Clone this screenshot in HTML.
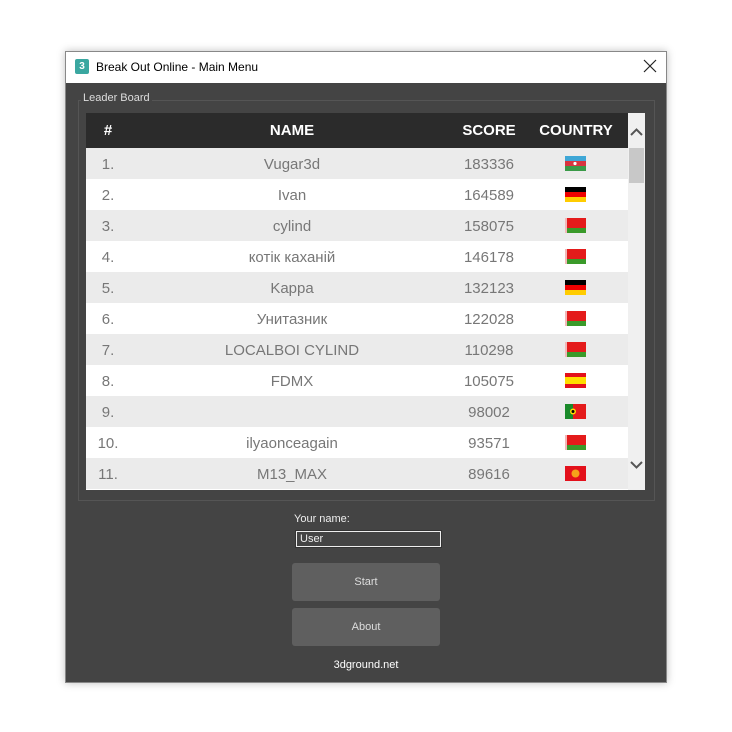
<!DOCTYPE html>
<html><head><style>
*{margin:0;padding:0;box-sizing:border-box}
body{width:732px;height:732px;background:#fff;position:relative;font-family:"Liberation Sans","Noto Sans CJK SC",sans-serif;overflow:hidden}
.win{position:absolute;left:65px;top:51px;width:602px;height:632px;background:#444;border:1px solid #888;box-shadow:0 0 8px rgba(0,0,0,.25)}
.tb{position:absolute;left:0;top:0;width:600px;height:31px;background:#fff;font-size:12px;color:#000}
.tb .ic{position:absolute;left:9px;top:7px;width:14px;height:15px;background:#3aa7a0;color:#fff;font-size:10px;font-weight:bold;text-align:center;line-height:15px;border-radius:2px}
.tb .t{position:absolute;left:30px;top:8px}
.tb .x{position:absolute;left:577px;top:7px}
.grp{position:absolute;left:12px;top:48px;width:577px;height:401px;border:1px solid #555}
.gl{position:absolute;left:15px;top:40px;font-size:11px;color:#ddd;background:#444;padding:0 2px}
.tbl{position:absolute;left:20px;top:61px;width:542px;height:377px;background:#fff;overflow:hidden}
.hd{height:35px;background:#2b2b2b;color:#fff;font-weight:bold;font-size:15px;position:relative}
.row{height:31px;position:relative;color:#777;font-size:15px}
.c{position:absolute;top:0;line-height:36px;text-align:center;transform:translateX(-50%);white-space:nowrap}
.row .c{line-height:34px}
.f{position:absolute;left:479px;top:8px;width:21px;height:15px}
.sb{position:absolute;left:562px;top:61px;width:17px;height:377px;background:#f0f0f0}
.th{position:absolute;left:1px;top:35px;width:15px;height:35px;background:#c8c8c8}
.lbl{position:absolute;left:228px;top:461px;color:#eee;font-size:11px}
.inp{position:absolute;left:230px;top:479px;width:145px;height:16px;border:1px solid #eee;outline:1px solid #333;background:#444;color:#eee;font-size:11px;padding-left:3px;line-height:14px}
.btn{position:absolute;left:226px;width:148px;height:38px;background:#5f5f5f;border-radius:3px;color:#ddd;font-size:11px;text-align:center;line-height:38px}
.ft{position:absolute;left:0;width:600px;top:607px;text-align:center;color:#fff;font-size:11px}
</style></head><body>
<div class="win">
<div class="tb"><div class="ic">3</div><div class="t">Break Out Online - Main Menu</div><svg class="x" width="14" height="14" viewBox="0 0 14 14"><path d="M1 1L13 13M13 1L1 13" stroke="#222" stroke-width="1.2"/></svg></div>
<div class="grp"></div><div class="gl">Leader Board</div>
<div class="tbl">
<div class="hd"><span class="c" style="left:22px">#</span><span class="c" style="left:206px">NAME</span><span class="c" style="left:403px">SCORE</span><span class="c" style="left:490px">COUNTRY</span></div>
<div>
<div class="row" style="background:#ebebeb"><span class="c" style="left:22px">1.</span><span class="c" style="left:206px">Vugar3d</span><span class="c" style="left:403px">183336</span><svg class="f" viewBox="0 0 21 15"><rect width="21" height="5" fill="#3fa7d6"/><rect y="5" width="21" height="5" fill="#d8343f"/><rect y="10" width="21" height="5" fill="#3a9a48"/><circle cx="10" cy="7.5" r="1.6" fill="#fff"/></svg></div>
<div class="row" style="background:#fff"><span class="c" style="left:22px">2.</span><span class="c" style="left:206px">Ivan</span><span class="c" style="left:403px">164589</span><svg class="f" viewBox="0 0 21 15"><rect width="21" height="5" fill="#000"/><rect y="5" width="21" height="5" fill="#e00"/><rect y="10" width="21" height="5" fill="#fc0"/></svg></div>
<div class="row" style="background:#ebebeb"><span class="c" style="left:22px">3.</span><span class="c" style="left:206px">cylind</span><span class="c" style="left:403px">158075</span><svg class="f" viewBox="0 0 21 15"><rect width="21" height="10" fill="#e41b1b"/><rect y="10" width="21" height="5" fill="#3a9a2a"/><rect width="2" height="15" fill="#f2b8b8"/></svg></div>
<div class="row" style="background:#fff"><span class="c" style="left:22px">4.</span><span class="c" style="left:206px">котік каханій</span><span class="c" style="left:403px">146178</span><svg class="f" viewBox="0 0 21 15"><rect width="21" height="10" fill="#e41b1b"/><rect y="10" width="21" height="5" fill="#3a9a2a"/><rect width="2" height="15" fill="#f2b8b8"/></svg></div>
<div class="row" style="background:#ebebeb"><span class="c" style="left:22px">5.</span><span class="c" style="left:206px">Kappa</span><span class="c" style="left:403px">132123</span><svg class="f" viewBox="0 0 21 15"><rect width="21" height="5" fill="#000"/><rect y="5" width="21" height="5" fill="#e00"/><rect y="10" width="21" height="5" fill="#fc0"/></svg></div>
<div class="row" style="background:#fff"><span class="c" style="left:22px">6.</span><span class="c" style="left:206px">Унитазник</span><span class="c" style="left:403px">122028</span><svg class="f" viewBox="0 0 21 15"><rect width="21" height="10" fill="#e41b1b"/><rect y="10" width="21" height="5" fill="#3a9a2a"/><rect width="2" height="15" fill="#f2b8b8"/></svg></div>
<div class="row" style="background:#ebebeb"><span class="c" style="left:22px">7.</span><span class="c" style="left:206px">LOCALBOI CYLIND</span><span class="c" style="left:403px">110298</span><svg class="f" viewBox="0 0 21 15"><rect width="21" height="10" fill="#e41b1b"/><rect y="10" width="21" height="5" fill="#3a9a2a"/><rect width="2" height="15" fill="#f2b8b8"/></svg></div>
<div class="row" style="background:#fff"><span class="c" style="left:22px">8.</span><span class="c" style="left:206px">FDMX</span><span class="c" style="left:403px">105075</span><svg class="f" viewBox="0 0 21 15"><rect width="21" height="15" fill="#e3101b"/><rect y="4" width="21" height="7" fill="#fd0"/></svg></div>
<div class="row" style="background:#ebebeb"><span class="c" style="left:22px">9.</span><span class="c" style="left:403px">98002</span><svg class="f" viewBox="0 0 21 15"><rect width="21" height="15" fill="#e41b1b"/><rect width="8" height="15" fill="#1a8a2a"/><circle cx="8" cy="7.5" r="3" fill="#fd0"/><circle cx="8" cy="7.5" r="1.5" fill="#000"/></svg></div>
<div class="row" style="background:#fff"><span class="c" style="left:22px">10.</span><span class="c" style="left:206px">ilyaonceagain</span><span class="c" style="left:403px">93571</span><svg class="f" viewBox="0 0 21 15"><rect width="21" height="10" fill="#e41b1b"/><rect y="10" width="21" height="5" fill="#3a9a2a"/><rect width="2" height="15" fill="#f2b8b8"/></svg></div>
<div class="row" style="background:#ebebeb"><span class="c" style="left:22px">11.</span><span class="c" style="left:206px">M13_MAX</span><span class="c" style="left:403px">89616</span><svg class="f" viewBox="0 0 21 15"><rect width="21" height="15" fill="#e3101b"/><circle cx="10.5" cy="7.5" r="4" fill="#f6a21a"/></svg></div>
</div></div>
<div class="sb"><svg width="17" height="35" viewBox="0 0 17 35"><path d="M3 22 L8.5 16.5 L14 22" fill="none" stroke="#555" stroke-width="2"/></svg><div class="th"></div><svg style="position:absolute;left:0;top:342px" width="17" height="20" viewBox="0 0 17 20"><path d="M3 7 L8.5 12.5 L14 7" fill="none" stroke="#555" stroke-width="2"/></svg></div>
<div class="lbl">Your name:</div>
<div class="inp">User</div>
<div class="btn" style="top:511px">Start</div>
<div class="btn" style="top:556px">About</div>
<div class="ft">3dground.net</div>
</div>
</body></html>
